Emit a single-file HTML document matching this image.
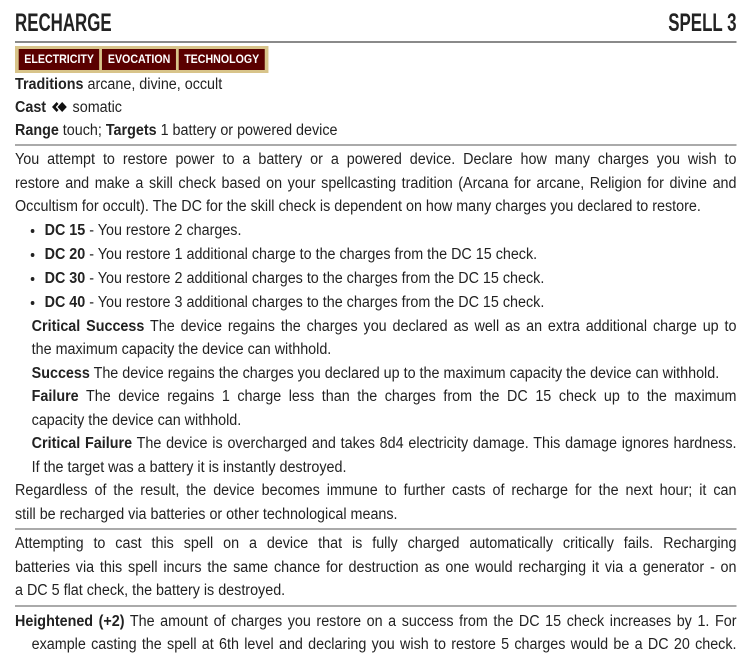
<!DOCTYPE html>
<html><head><meta charset="utf-8"><style>
body{margin:0;background:#fff;color:#222;font-family:"Liberation Sans",sans-serif;font-size:15.5px;overflow:hidden}
.w{position:absolute;left:15px;top:0;width:780px;transform:scaleX(0.925);transform-origin:0 0;}
.t{height:41px;border-bottom:2px solid #8a8a8a;position:relative;}
.tt{position:absolute;bottom:3px;font-weight:bold;font-size:25px;transform:scaleX(0.73);}
.bar{display:inline-block;background:#d8c48a;padding:3px 4px;margin-top:3px;height:21px;}
.tag{display:inline-block;background:#5a0000;color:#fff;font-weight:bold;font-size:11.5px;height:21px;line-height:22px;padding:0 6px;margin-right:3px;}
.l{line-height:23px;}
.hr{border-top:2px solid #aaa;margin:2px 0 2px;}
.j,.e{line-height:23.5px;white-space:nowrap;}
.j{text-align:justify;text-align-last:justify;white-space:normal;}
ul{margin:0;padding-left:32px;line-height:24px;list-style:disc;}
.ind{padding-left:18px;}
.ind2{padding-left:18px;}
b{font-weight:bold}
</style></head><body><div class="w">
<div class="t"><span class="tt" style="left:0;transform-origin:0 100%">RECHARGE</span><span class="tt" style="right:0;transform-origin:100% 100%">SPELL 3</span></div>
<div class="bar"><span class="tag">ELECTRICITY</span><span class="tag">EVOCATION</span><span class="tag" style="margin-right:0">TECHNOLOGY</span></div>
<div class="l"><b>Traditions</b> arcane, divine, occult</div>
<div class="l"><b>Cast</b> <svg width="20" height="14" viewBox="0 0 18 14" style="vertical-align:-2px"><path d="M1 7L6 2 8 4 5 7 8 10 6 12Z M7 7L12 2 17 7 12 12Z" fill="#111"/></svg> somatic</div>
<div class="l"><b>Range</b> touch; <b>Targets</b> 1 battery or powered device</div>
<div class="hr"></div>
<div class="j">You attempt to restore power to a battery or a powered device. Declare how many charges you wish to</div>
<div class="j">restore and make a skill check based on your spellcasting tradition (Arcana for arcane, Religion for divine and</div>
<div class="e">Occultism for occult). The DC for the skill check is dependent on how many charges you declared to restore.</div>
<ul>
<li><b>DC 15</b> - You restore 2 charges.</li>
<li><b>DC 20</b> - You restore 1 additional charge to the charges from the DC 15 check.</li>
<li><b>DC 30</b> - You restore 2 additional charges to the charges from the DC 15 check.</li>
<li><b>DC 40</b> - You restore 3 additional charges to the charges from the DC 15 check.</li>
</ul>
<div class="ind">
<div class="j"><b>Critical Success</b> The device regains the charges you declared as well as an extra additional charge up to</div>
<div class="e">the maximum capacity the device can withhold.</div>
<div class="e"><b>Success</b> The device regains the charges you declared up to the maximum capacity the device can withhold.</div>
<div class="j"><b>Failure</b> The device regains 1 charge less than the charges from the DC 15 check up to the maximum</div>
<div class="e">capacity the device can withhold.</div>
<div class="j"><b>Critical Failure</b> The device is overcharged and takes 8d4 electricity damage. This damage ignores hardness.</div>
<div class="e">If the target was a battery it is instantly destroyed.</div>
</div>
<div class="j">Regardless of the result, the device becomes immune to further casts of recharge for the next hour; it can</div>
<div class="e">still be recharged via batteries or other technological means.</div>
<div class="hr"></div>
<div class="j">Attempting to cast this spell on a device that is fully charged automatically critically fails. Recharging</div>
<div class="j">batteries via this spell incurs the same chance for destruction as one would recharging it via a generator - on</div>
<div class="e">a DC 5 flat check, the battery is destroyed.</div>
<div class="hr" style="margin-bottom:3px"></div>
<div class="j"><b>Heightened (+2)</b> The amount of charges you restore on a success from the DC 15 check increases by 1. For</div>
<div class="ind2"><div class="j">example casting the spell at 6th level and declaring you wish to restore 5 charges would be a DC 20 check.</div></div>
</div></body></html>
